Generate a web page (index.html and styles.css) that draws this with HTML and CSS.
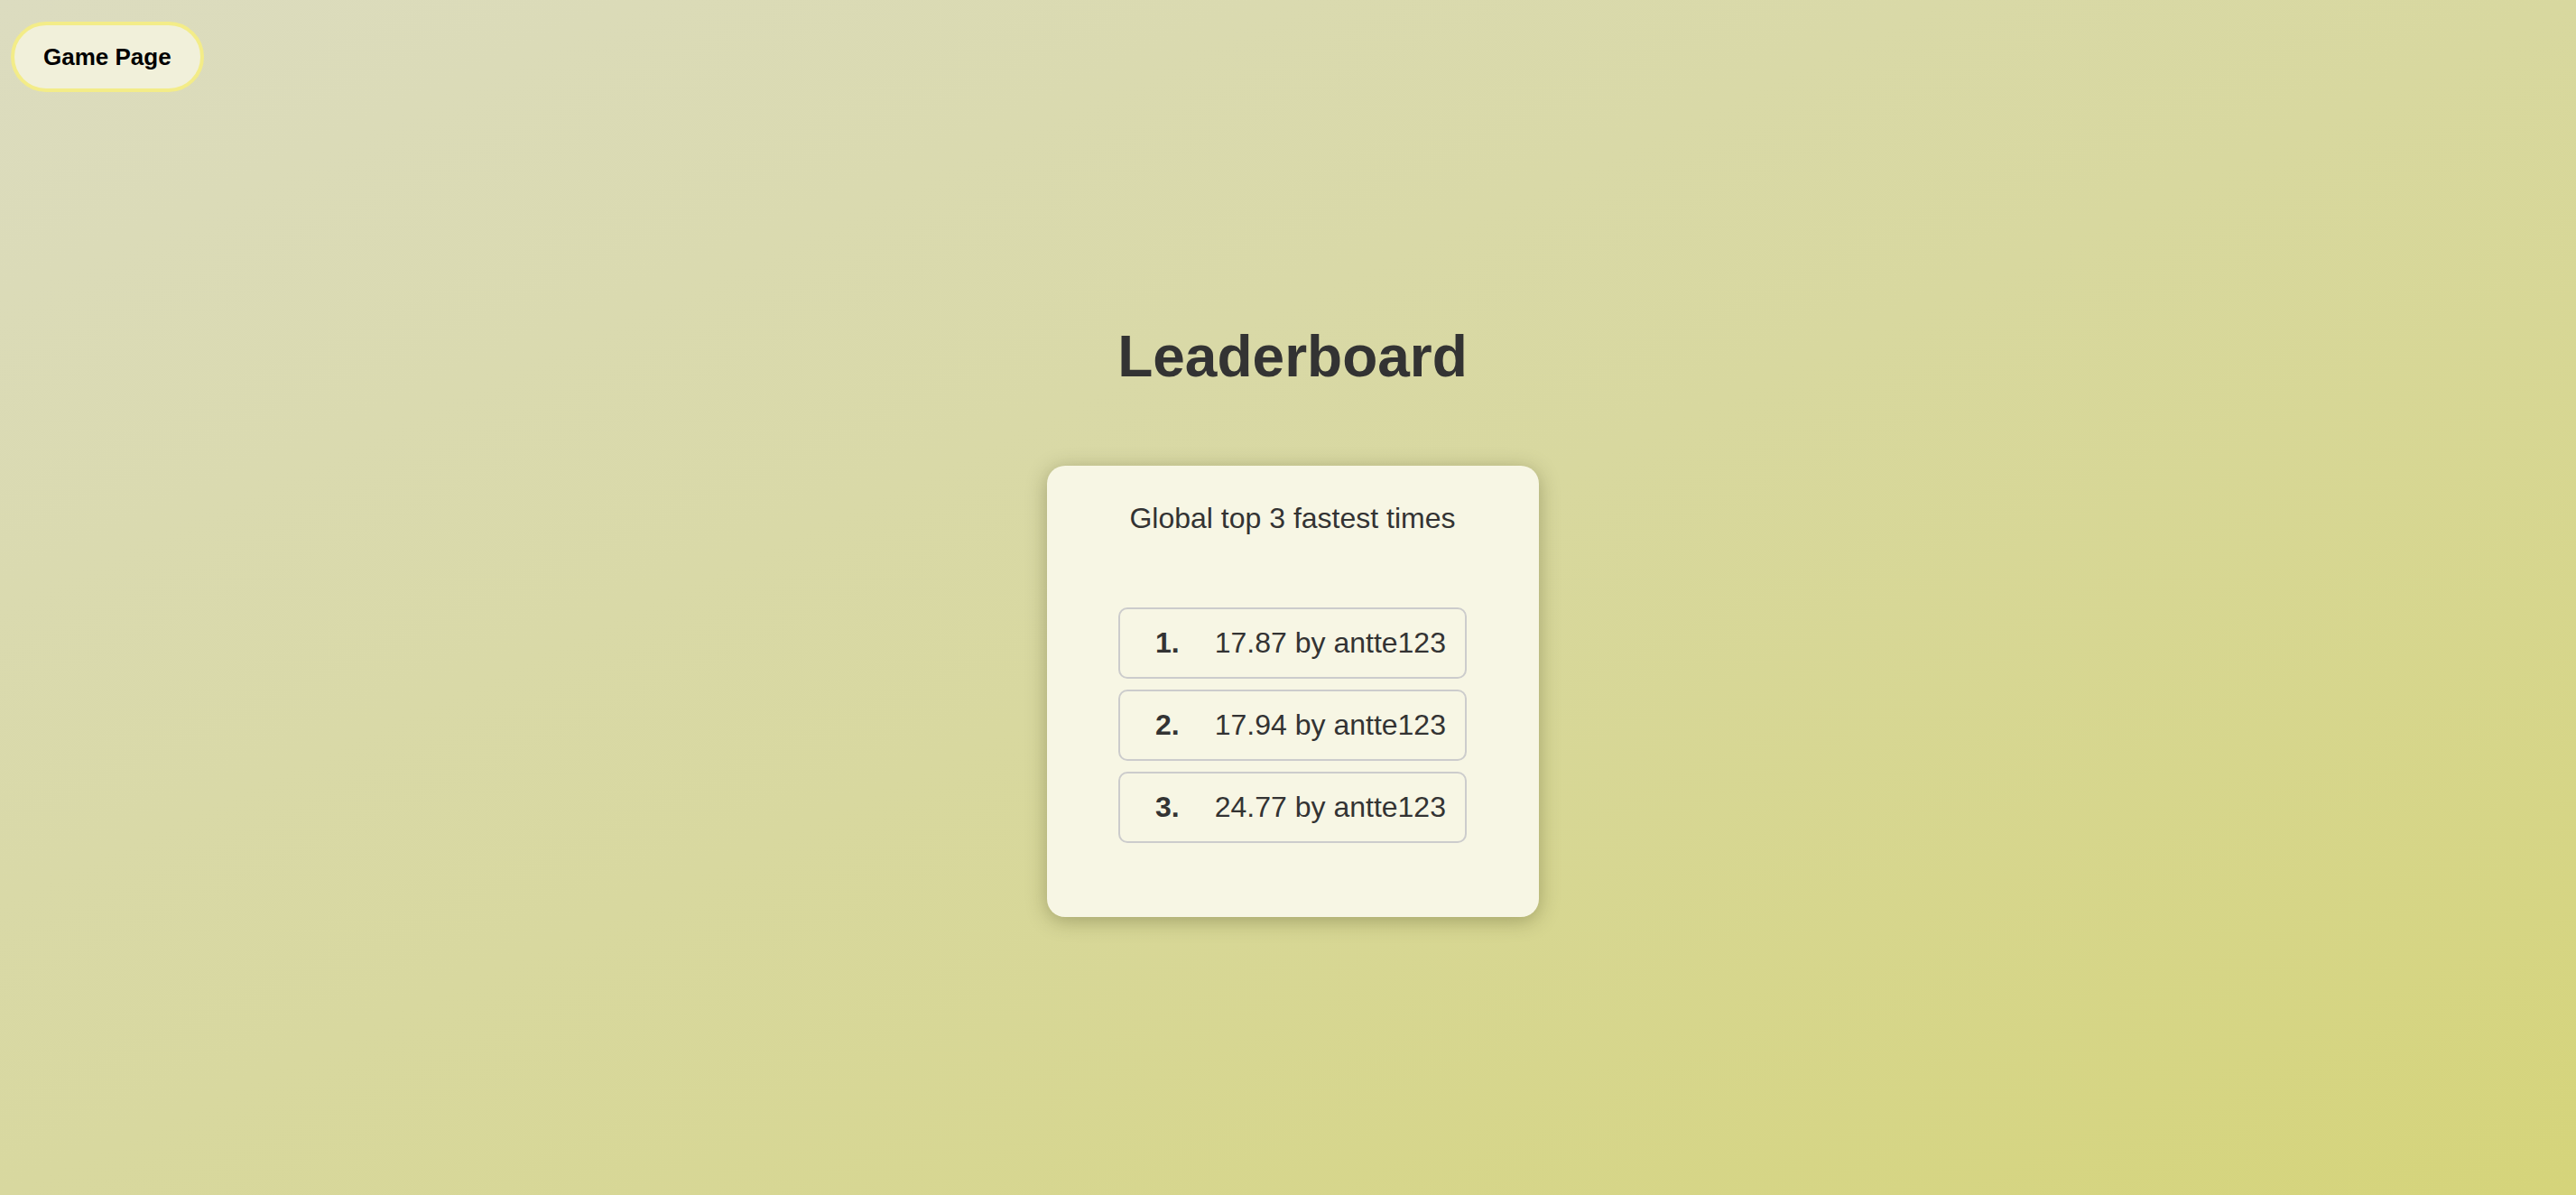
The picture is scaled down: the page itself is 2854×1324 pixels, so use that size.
FILE: index.html
```html
<!DOCTYPE html>
<html lang="en">
<head>
<meta charset="utf-8">
<title>Leaderboard</title>
<link rel="stylesheet" href="styles.css">
</head>
<body>
  <nav class="topbar">
    <a class="nav-btn" href="#">Game Page</a>
  </nav>
  <main class="content">
    <h1 class="title">Leaderboard</h1>
    <section class="card">
      <p class="subtitle">Global top 3 fastest times</p>
      <ol class="scores">
        <li class="score-row"><span class="rank">1.</span><span class="entry">17.87 by antte123</span></li>
        <li class="score-row"><span class="rank">2.</span><span class="entry">17.94 by antte123</span></li>
        <li class="score-row"><span class="rank">3.</span><span class="entry">24.77 by antte123</span></li>
      </ol>
    </section>
  </main>
</body>
</html>
```
FILE: styles.css
```css
* { box-sizing: border-box; }

html, body {
  margin: 0;
  height: 100%;
}

body {
  font-family: "Liberation Sans", Arial, sans-serif;
  color: #333333;
  background: linear-gradient(to bottom right, #dcdcc0 0%, #d8d89f 50%, #d5d47a 100%);
  min-height: 1324px;
}

.topbar {
  padding: 24px 0 0 12px;
  height: 102px;
}

.nav-btn {
  display: inline-block;
  font-size: 26px;
  font-weight: bold;
  color: #000;
  text-decoration: none;
  line-height: 30px;
  padding: 20px 32px;
  border: 4px solid #f3ec88;
  border-radius: 40px;
  background: #f1f0da;
}

.content {
  display: flex;
  flex-direction: column;
  align-items: center;
  padding-left: 10px;
}

.title {
  margin: 256px 0 0;
  font-size: 64px;
  font-weight: bold;
  line-height: 74px;
  color: #333333;
}

.card {
  margin-top: 84px;
  width: 545px;
  padding: 40px 0 82px;
  background: #f7f6e4;
  border-radius: 20px;
  box-shadow: 0 4px 22px rgba(60, 60, 20, 0.35);
  display: flex;
  flex-direction: column;
  align-items: center;
}

.subtitle {
  margin: 0;
  font-size: 32px;
  line-height: 37px;
  color: #333333;
}

.scores {
  list-style: none;
  margin: 80px 0 0;
  padding: 0;
  display: flex;
  flex-direction: column;
  gap: 12px;
  align-items: center;
}

.score-row {
  display: flex;
  align-items: baseline;
  gap: 39px;
  font-size: 32px;
  line-height: 37px;
  padding: 19px 21px 19px 39px;
  border: 2px solid #cccccc;
  border-radius: 10px;
  background: #f7f6e4;
}

.rank {
  font-weight: bold;
}
```
